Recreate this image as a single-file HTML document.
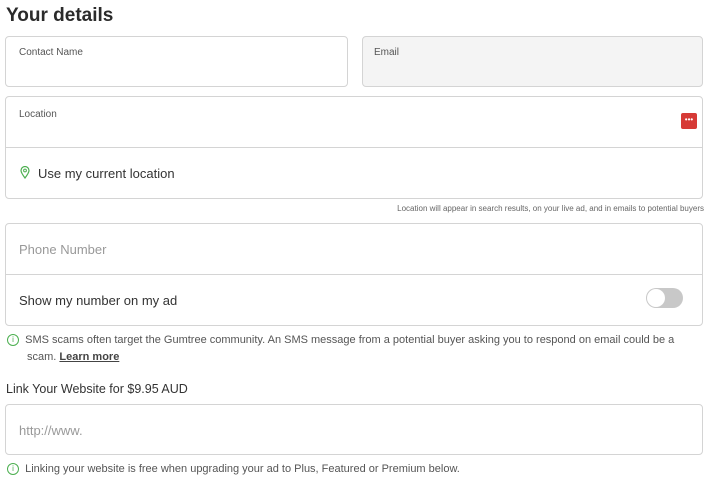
<!DOCTYPE html>
<html><head><style>
body{margin:0;width:712px;height:481px;background:#fff;font-family:"Liberation Sans",sans-serif;color:#333;position:relative;overflow:hidden}
.a{position:absolute}
.box{position:absolute;border:1px solid #d4d4d4;border-radius:4px;box-sizing:border-box;background:#fff}
.lbl{font-size:10px;color:#555}
.t{font-size:13px;color:#333;white-space:nowrap}
.ph{font-size:13px;color:#999}
.info{font-size:11px;color:#555;white-space:nowrap}
.ic{display:inline-block;width:10px;height:10px;border:1px solid #4caf50;border-radius:50%;color:#4caf50;font-size:8px;line-height:10px;text-align:center;vertical-align:middle}
</style></head><body>
<div class="a" style="left:6px;top:5px;font-size:19px;font-weight:bold;color:#2b2b2b">Your details</div>
<div class="box" style="left:5px;top:36px;width:343px;height:51px"></div>
<div class="a lbl" style="left:19px;top:47px">Contact Name</div>
<div class="box" style="left:362px;top:36px;width:341px;height:51px;background:#f4f4f4"></div>
<div class="a lbl" style="left:374px;top:47px">Email</div>
<div class="box" style="left:5px;top:96px;width:698px;height:103px"></div>
<div class="a" style="left:6px;top:147px;width:696px;height:1px;background:#d4d4d4"></div>
<div class="a lbl" style="left:19px;top:109px">Location</div>
<div class="a" style="left:681px;top:113px;width:16px;height:16px;background:#d63a36;border-radius:2px;color:#fff;font-size:8px;line-height:14px;text-align:center">•••</div>
<svg class="a" style="left:20px;top:166px" width="10" height="13" viewBox="0 0 10 13"><path d="M5 12C2 8 1 6 1 4.5A4 4 0 0 1 9 4.5C9 6 8 8 5 12Z" fill="none" stroke="#4caf50" stroke-width="1.2"/><circle cx="5" cy="4.5" r="1.4" fill="none" stroke="#4caf50"/></svg>
<div class="a t" style="left:38px;top:166px">Use my current location</div>
<div class="a" style="right:8px;top:204px;font-size:8px;color:#666">Location will appear in search results, on your live ad, and in emails to potential buyers</div>
<div class="box" style="left:5px;top:223px;width:698px;height:103px"></div>
<div class="a" style="left:6px;top:274px;width:696px;height:1px;background:#d4d4d4"></div>
<div class="a ph" style="left:19px;top:242px">Phone Number</div>
<div class="a t" style="left:19px;top:293px">Show my number on my ad</div>
<div class="a" style="left:646px;top:288px;width:37px;height:20px;background:#c8c8c8;border-radius:10px"></div>
<div class="a" style="left:647px;top:289px;width:18px;height:18px;background:#fff;border-radius:50%"></div>
<div class="a info" style="left:7px;top:334px"><span class="ic">i</span>&nbsp; SMS scams often target the Gumtree community. An SMS message from a potential buyer asking you to respond on email could be a</div>
<div class="a info" style="left:27px;top:351px">scam. <b style="text-decoration:underline;color:#444">Learn more</b></div>
<div class="a t" style="left:6px;top:382px;font-size:12.5px">Link Your Website for $9.95 AUD</div>
<div class="box" style="left:5px;top:404px;width:698px;height:51px"></div>
<div class="a ph" style="left:19px;top:423px">http://www.</div>
<div class="a info" style="left:7px;top:463px"><span class="ic">i</span>&nbsp; Linking your website is free when upgrading your ad to Plus, Featured or Premium below.</div>
</body></html>
